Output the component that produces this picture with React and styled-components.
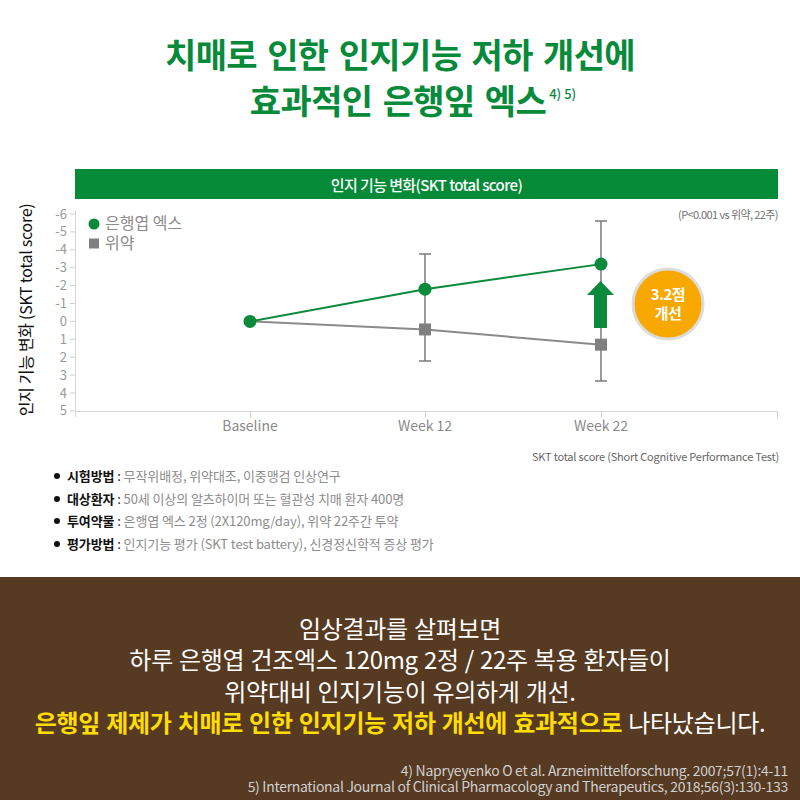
import React from "react";
import styled, { createGlobalStyle } from "styled-components";

const GlobalStyle = createGlobalStyle`
  * { box-sizing: border-box; }
  body {
    margin: 0;
    background: #fff;
    font-family: "Noto Sans CJK KR", "Noto Sans", sans-serif;
  }
`;

const yOf = (v) => 214 + (v + 6) * 17.9;
const ticks = [-6, -5, -4, -3, -2, -1, 0, 1, 2, 3, 4, 5];
const weeks = [
  { label: "Baseline", x: 250 },
  { label: "Week 12", x: 425 },
  { label: "Week 22", x: 601 },
];
const ginkgo = [0, -1.8, -3.2];
const placebo = [0, 0.45, 1.3];
const errors = [
  { x: 425, top: 254, bottom: 361 },
  { x: 601, top: 221, bottom: 381 },
];

const bullets = [
  { label: "시험방법", value: "무작위배정, 위약대조, 이중맹검 인상연구" },
  { label: "대상환자", value: "50세 이상의 알츠하이머 또는 혈관성 치매 환자 400명" },
  { label: "투여약물", value: "은행엽 엑스 2정 (2X120mg/day), 위약 22주간 투약" },
  { label: "평가방법", value: "인지기능 평가 (SKT test battery), 신경정신학적 증상 평가" },
];

function Chart() {
  const gPts = ginkgo.map((v, i) => `${weeks[i].x},${yOf(v)}`).join(" ");
  const pPts = placebo.map((v, i) => `${weeks[i].x},${yOf(v)}`).join(" ");
  return (
    <svg width="738" height="241" viewBox="40 199 738 241">
      {/* axes */}
      <line x1="75.5" y1="210" x2="75.5" y2="417" stroke="#d6d6d6" strokeWidth="1" />
      <line x1="75" y1="411.5" x2="777" y2="411.5" stroke="#d6d6d6" strokeWidth="1" />
      {ticks.map((t) => (
        <g key={t}>
          <line x1="70" y1={yOf(t)} x2="75" y2={yOf(t)} stroke="#cfcfcf" />
          <text x="67" y={yOf(t) + 4.5} textAnchor="end" fontSize="13" fill="#9a9a9a">
            {t}
          </text>
        </g>
      ))}
      {[...weeks.map((w) => w.x), 777].map((x) => (
        <line key={x} x1={x + 0.5} y1="411" x2={x + 0.5} y2="418" stroke="#cfcfcf" />
      ))}
      {weeks.map((w) => (
        <text key={w.label} x={w.x} y="431" textAnchor="middle" fontSize="14" fill="#8a8a8a">
          {w.label}
        </text>
      ))}

      {/* legend */}
      <circle cx="94" cy="224" r="5.5" fill="#0a8a3a" />
      <text x="105" y="229" fontSize="16" fill="#8a8a8a">은행엽 엑스</text>
      <rect x="89" y="238.5" width="10" height="10" fill="#808080" />
      <text x="105" y="249" fontSize="16" fill="#8a8a8a">위약</text>

      <text x="778" y="219" textAnchor="end" fontSize="11" fill="#707070" letterSpacing="-0.6">
        (P&lt;0.001 vs 위약, 22주)
      </text>

      {/* error bars */}
      {errors.map((e) => (
        <g key={e.x} stroke="#7a7a7a" strokeWidth="1.5">
          <line x1={e.x} y1={e.top} x2={e.x} y2={e.bottom} />
          <line x1={e.x - 6} y1={e.top} x2={e.x + 6} y2={e.top} />
          <line x1={e.x - 6} y1={e.bottom} x2={e.x + 6} y2={e.bottom} />
        </g>
      ))}

      {/* series */}
      <polyline points={pPts} fill="none" stroke="#8a8a8a" strokeWidth="2" />
      <polyline points={gPts} fill="none" stroke="#0a8a3a" strokeWidth="2" />
      {placebo.map((v, i) =>
        i === 0 ? null : (
          <rect key={i} x={weeks[i].x - 6} y={yOf(v) - 6} width="12" height="12" fill="#808080" />
        )
      )}
      {ginkgo.map((v, i) => (
        <circle key={i} cx={weeks[i].x} cy={yOf(v)} r="6.5" fill="#0a8a3a" />
      ))}

      {/* improvement arrow */}
      <polygon
        points="600.5,281 614,295 607,295 607,328 594,328 594,295 587,295"
        fill="#0a8a3a"
      />

      {/* badge */}
      <circle cx="668" cy="304" r="35" fill="#f8a800" stroke="#dcdcdc" strokeWidth="3" />
      <text x="668" y="300" textAnchor="middle" fontSize="15" fontWeight="700" fill="#fff" letterSpacing="-0.5">
        3.2점
      </text>
      <text x="668" y="319" textAnchor="middle" fontSize="15" fontWeight="700" fill="#fff" letterSpacing="-0.5">
        개선
      </text>
    </svg>
  );
}

export default function App() {
  return (
    <Page>
      <GlobalStyle />
      <Top>
        <Title>
          <span>치매로 인한 인지기능 저하 개선에</span>
          <TitleLine>
            효과적인 은행잎 엑스<Sup>4) 5)</Sup>
          </TitleLine>
        </Title>
        <ChartBar>인지 기능 변화(SKT total score)</ChartBar>
        <PlotRow>
          <YLabel>
            <span>인지 기능 변화 (SKT total score)</span>
          </YLabel>
          <Chart />
        </PlotRow>
        <Note>SKT total score (Short Cognitive Performance Test)</Note>
        <BulletList>
          {bullets.map((b) => (
            <Bullet key={b.label}>
              <b>{b.label}</b> : <span>{b.value}</span>
            </Bullet>
          ))}
        </BulletList>
      </Top>
      <Bottom>
        <Summary>
          <p>임상결과를 살펴보면</p>
          <p>하루 은행엽 건조엑스 120mg 2정 / 22주 복용 환자들이</p>
          <p>위약대비 인지기능이 유의하게 개선.</p>
          <p>
            <Highlight>은행잎 제제가 치매로 인한 인지기능 저하 개선에 효과적으로</Highlight>{" "}
            나타났습니다.
          </p>
        </Summary>
        <Refs>
          <p>4) Napryeyenko O et al. Arzneimittelforschung. 2007;57(1):4-11</p>
          <p>5) International Journal of Clinical Pharmacology and Therapeutics, 2018;56(3):130-133</p>
        </Refs>
      </Bottom>
    </Page>
  );
}

const Page = styled.div`
  width: 800px;
  height: 800px;
  overflow: hidden;
  display: flex;
  flex-direction: column;
`;

// TODO: upper white area with title, chart and study notes
const Top = styled.div`
  height: 577px;
  padding-top: 31px;
  display: flex;
  flex-direction: column;
`;

const Title = styled.h1`
  margin: 0;
  display: flex;
  flex-direction: column;
  align-items: center;
  font-size: 34px;
  line-height: 46px;
  font-weight: 700;
  letter-spacing: -0.6px;
  color: #078a3a;
  word-spacing: 3px;
`;

const TitleLine = styled.span`
  padding-left: 26px;
`;

const Sup = styled.sup`
  font-size: 13px;
  letter-spacing: 0;
  word-spacing: 0;
  vertical-align: 15px;
  line-height: 0;
  margin-left: 3px;
  font-weight: 500;
`;

const ChartBar = styled.div`
  margin: 46px 0 0 75px;
  width: 703px;
  height: 30px;
  background: #058a38;
  color: #fff;
  font-size: 15px;
  font-weight: 500;
  letter-spacing: -0.6px;
  display: flex;
  align-items: center;
  justify-content: center;
`;

const PlotRow = styled.div`
  display: flex;
  height: 241px;
`;

const YLabel = styled.div`
  width: 40px;
  height: 222px;
  display: flex;
  align-items: center;
  justify-content: center;
  padding-left: 10px;

  span {
    display: inline-block;
    transform: rotate(-90deg);
    font-size: 16px;
    line-height: 20px;
    color: #111;
    white-space: nowrap;
    letter-spacing: -0.3px;
  }
`;

const Note = styled.div`
  margin: 8px 0 0;
  width: 779px;
  text-align: right;
  font-size: 11px;
  line-height: 16px;
  color: #666;
  letter-spacing: -0.2px;
`;

const BulletList = styled.ul`
  margin: 1px 0 0;
  padding: 0 0 0 54px;
  list-style: none;
`;

const Bullet = styled.li`
  font-size: 13px;
  line-height: 22.5px;
  color: #222;
  letter-spacing: -0.1px;

  &::before {
    content: "";
    display: inline-block;
    width: 6px;
    height: 6px;
    border-radius: 50%;
    background: #111;
    margin-right: 7px;
    vertical-align: 2px;
  }

  b {
    font-weight: 700;
    color: #111;
  }

  span {
    color: #8c8c8c;
  }
`;

// TODO: brown summary block
const Bottom = styled.div`
  flex: 1;
  background: #573a22;
  padding-top: 35px;
  display: flex;
  flex-direction: column;
`;

const Summary = styled.div`
  text-align: center;
  color: #fff;
  font-size: 24px;
  line-height: 31.3px;
  letter-spacing: -0.3px;
  word-spacing: 1px;

  p {
    margin: 0;
  }
`;

const Highlight = styled.span`
  color: #ffdd00;
  font-weight: 700;
`;

const Refs = styled.div`
  margin-top: 26px;
  padding-right: 12px;
  text-align: right;
  color: #cfcfcf;
  font-size: 14px;
  line-height: 15.5px;
  letter-spacing: -0.3px;

  p {
    margin: 0;
  }
`;
